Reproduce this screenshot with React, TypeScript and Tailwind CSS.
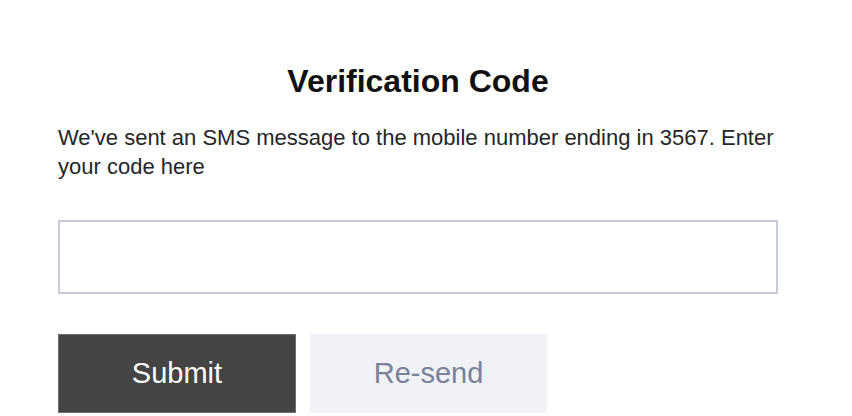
import React from "react";

export default function App() {
  return (
    <div
      className="w-[852px] h-[416px] overflow-hidden bg-white pl-[58px]"
      style={{ fontFamily: '"Liberation Sans", Arial, Helvetica, sans-serif' }}
    >
      <div className="w-[720px] flex flex-col">
        <h1 className="mt-[61px] text-[32px] leading-[40px] font-bold text-center text-[#111111]">
          Verification Code
        </h1>
        <p className="mt-[22px] text-[22px] leading-[29px] text-[#262626]">
          We've sent an SMS message to the mobile number ending in 3567. Enter your code here
        </p>
        <input
          type="text"
          className="mt-[39px] h-[74px] w-[720px] border-2 border-[#c7cad9] bg-white outline-none px-4 text-[22px]"
        />
        <div className="mt-[40px] flex gap-[14px]">
          <button className="w-[238px] h-[79px] flex items-center justify-center bg-[#444444] border border-[#6e6e6e] text-white text-[29px]">
            Submit
          </button>
          <button className="w-[237px] h-[79px] flex items-center justify-center bg-[#f0f2f6] text-[#7a8198] text-[29px]">
            Re-send
          </button>
        </div>
      </div>
    </div>
  );
}
